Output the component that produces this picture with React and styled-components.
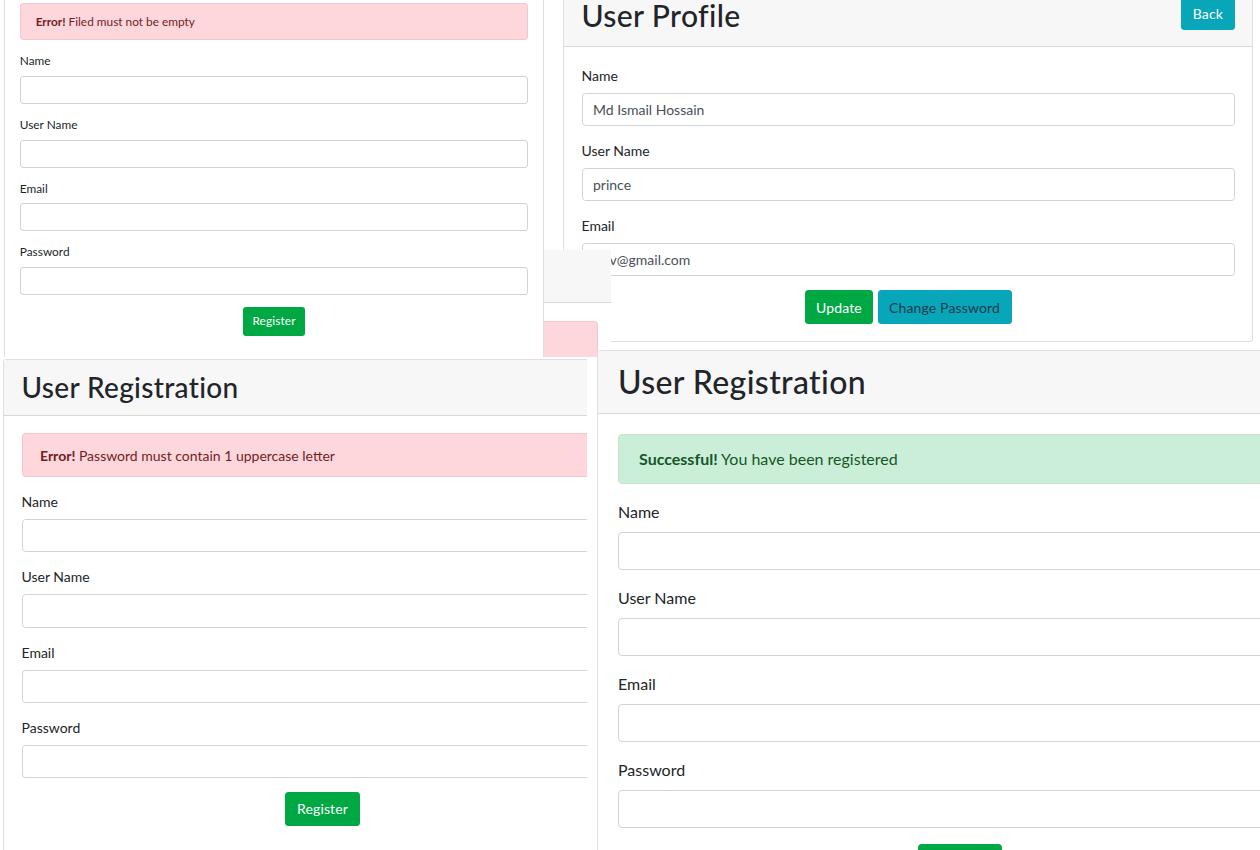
import styled, { createGlobalStyle } from 'styled-components';

const GlobalStyle = createGlobalStyle`
  body {
    margin: 0;
    background: #fff;
    font-family: Lato, "Open Sans", sans-serif;
    color: #212529;
  }
`;

const Desktop = styled.div`
  position: relative;
  width: 1260px;
  height: 850px;
  overflow: hidden;
  background: #fff;
`;

// one cropped screenshot pasted onto the collage
const Shot = styled.div`
  position: absolute;
  left: ${(p) => p.$x}px;
  top: ${(p) => p.$y}px;
  width: ${(p) => p.$w}px;
  height: ${(p) => p.$h}px;
  z-index: ${(p) => p.$z};
  overflow: hidden;
`;

const Card = styled.div`
  font-size: ${(p) => p.$size}px;
  width: ${(p) => p.$w}px;
  min-height: ${(p) => p.$minH || 0}px;
  margin-left: ${(p) => p.$dx || 0}px;
  margin-top: ${(p) => p.$dy || 0}px;
  box-sizing: border-box;
  background: #fff;
  border: 1px solid rgba(0, 0, 0, 0.125);
  border-radius: 0.25em;
`;

const CardHeader = styled.div`
  display: flex;
  align-items: flex-start;
  justify-content: space-between;
  padding: 0.75em 1.25em;
  background: #f7f7f7;
  border-bottom: 1px solid rgba(0, 0, 0, 0.125);
`;

const Title = styled.h2`
  margin: 0;
  font-size: 2em;
  font-weight: 500;
  line-height: 1.2;
  letter-spacing: 0.012em;
  color: #212529;
  min-height: 1.2em;
`;

const ProfileTitle = styled(Title)`
  font-size: 2.15em;
  line-height: 0.8;
  min-height: 0;
  margin: 3px 0 9px;
`;

const CardBody = styled.div`
  padding: 1.25em;
`;

const Alert = styled.div`
  padding: 0.75em 1.25em;
  margin-bottom: 1em;
  line-height: 1.5;
  min-height: 1.5em;
  border: 1px solid ${(p) => (p.$ok ? '#c3e6cb' : '#f5c6cb')};
  border-radius: 0.25em;
  background: ${(p) => (p.$ok ? '#cbeed9' : '#fdd7dc')};
  color: ${(p) => (p.$ok ? '#155724' : '#721c24')};
  white-space: nowrap;

  strong {
    font-weight: 700;
  }
`;

const FormGroup = styled.div`
  margin-bottom: 1em;
`;

const Label = styled.label`
  display: inline-block;
  margin-bottom: 0.5em;
  line-height: 1.5;
  color: #212529;
`;

const Input = styled.input`
  display: block;
  width: 100%;
  height: 2.375em;
  box-sizing: border-box;
  padding: 0.375em 0.75em;
  font: inherit;
  font-size: 1em;
  line-height: 1.5;
  color: #495057;
  background: #fff;
  border: 1px solid #ced4da;
  border-radius: 0.25em;
  outline: none;
`;

const Actions = styled.div`
  display: flex;
  justify-content: center;
  gap: 0.3em;
`;

const Button = styled.button`
  padding: 0.375em 0.75em;
  font: inherit;
  font-size: 1em;
  line-height: 1.5;
  letter-spacing: 0.01em;
  border: 1px solid transparent;
  border-radius: 0.25em;
  background: ${(p) => (p.$info ? '#07a6b8' : '#00a843')};
  color: ${(p) => (p.$dark ? '#1c3a4c' : '#fff')};
  cursor: pointer;
`;

const BackButton = styled(Button)`
  margin-top: -0.2em;
`;

const fields = ['Name', 'User Name', 'Email', 'Password'];

function RegisterForm({ alert }) {
  return (
    <CardBody>
      {alert}
      {fields.map((f) => (
        <FormGroup key={f}>
          <Label>{f}</Label>
          <Input type={f === 'Password' ? 'password' : 'text'} />
        </FormGroup>
      ))}
      <Actions>
        <Button>Register</Button>
      </Actions>
    </CardBody>
  );
}

function Registration({ alert, noHeader, ...card }) {
  return (
    <Card {...card}>
      {!noHeader && (
        <CardHeader>
          <Title>User Registration</Title>
        </CardHeader>
      )}
      <RegisterForm alert={alert} />
    </Card>
  );
}

function Profile() {
  const values = [
    ['Name', 'Md Ismail Hossain'],
    ['User Name', 'prince'],
    ['Email', 'mrv@gmail.com'],
  ];
  return (
    <Card $size={14} $w={690} $dy={-12}>
      <CardHeader>
        <ProfileTitle>User Profile</ProfileTitle>
        <BackButton $info>Back</BackButton>
      </CardHeader>
      <CardBody>
        {values.map(([label, value]) => (
          <FormGroup key={label}>
            <Label>{label}</Label>
            <Input defaultValue={value} />
          </FormGroup>
        ))}
        <Actions>
          <Button>Update</Button>
          <Button $info $dark>
            Change Password
          </Button>
        </Actions>
      </CardBody>
    </Card>
  );
}

export default function App() {
  return (
    <>
      <GlobalStyle />
      <Desktop>
        <Shot $x={563} $y={0} $w={697} $h={352} $z={1}>
          <Profile />
        </Shot>

        {/* sliver of a third form peeking out between the others */}
        <Shot $x={544} $y={250} $w={67} $h={107} $z={2}>
          <Card $size={14.4} $w={200} $dx={-127} $dy={-5}>
            <CardHeader>
              <Title />
            </CardHeader>
            <CardBody>
              <Alert />
            </CardBody>
          </Card>
        </Shot>

        <Shot $x={0} $y={0} $w={545} $h={357} $z={3}>
          <Registration
            noHeader
            $size={11.85}
            $w={540}
            $minH={400}
            $dx={4}
            $dy={-13}
            alert={
              <Alert>
                <strong>Error!</strong> Filed must not be empty
              </Alert>
            }
          />
        </Shot>

        <Shot $x={0} $y={357} $w={587} $h={493} $z={3}>
          <Registration
            $size={14}
            $w={639}
            $minH={520}
            $dx={3}
            $dy={2}
            alert={
              <Alert>
                <strong>Error!</strong> Password must contain 1 uppercase letter
              </Alert>
            }
          />
        </Shot>

        <Shot $x={597} $y={350} $w={663} $h={500} $z={4}>
          <Registration
            $size={16}
            $w={726}
            alert={
              <Alert $ok>
                <strong>Successful!</strong> You have been registered
              </Alert>
            }
          />
        </Shot>
      </Desktop>
    </>
  );
}
